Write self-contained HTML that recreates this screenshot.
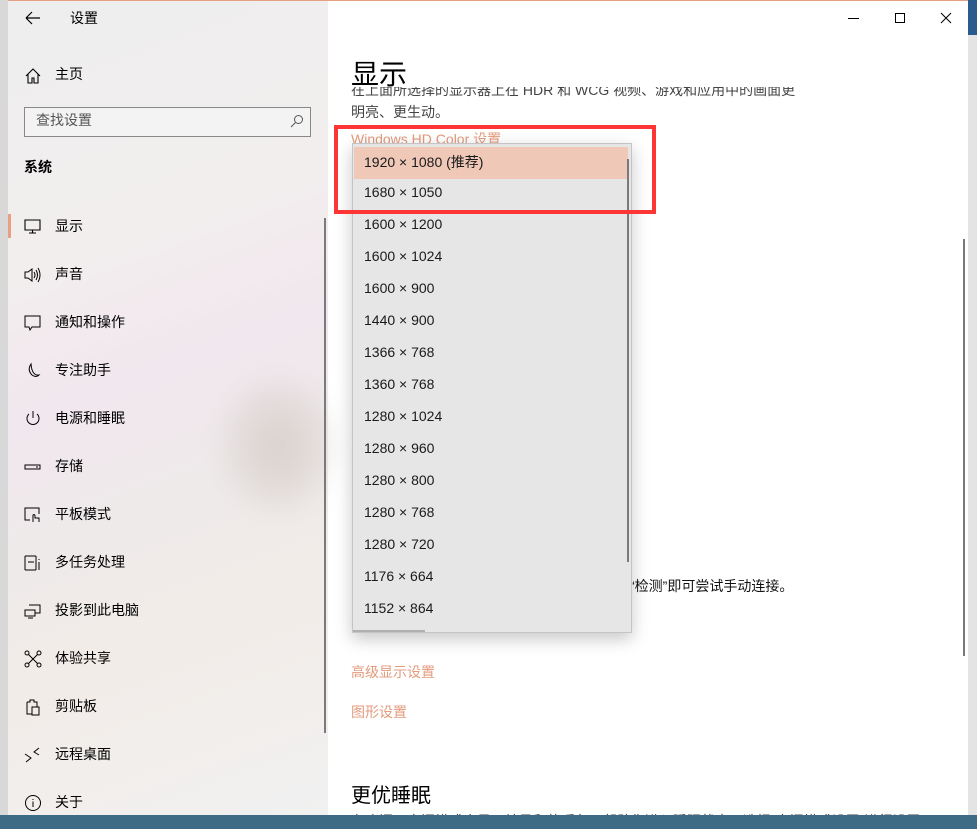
<!DOCTYPE html>
<html><head><meta charset="utf-8"><style>
*{margin:0;padding:0;box-sizing:border-box}
body{width:977px;height:829px;overflow:hidden;position:relative;background:#3d6a85;font-family:"Liberation Sans","Noto Sans CJK SC",sans-serif;color:#000}
.bgl{position:absolute;left:0;top:0;width:8px;height:815px;background:#d8d8d8}
.bgr{position:absolute;left:968px;top:0;width:9px;height:815px;background:#e4e4e4}
.bgr2{position:absolute;left:968px;top:0;width:9px;height:35px;background:#2b5a8c}
.win{position:absolute;left:8px;top:0;width:960px;height:815px;background:#fff;border-top:1px solid #e8a084;overflow:hidden}
.side{position:absolute;left:0;top:0;width:320px;height:815px;background:linear-gradient(160deg,#eeeeee 0%,#f2eeee 30%,#f1e7ee 45%,#eeeaea 60%,#f2ece8 75%,#f1f1f1 100%)}
.blob{position:absolute;left:215px;top:380px;width:110px;height:130px;border-radius:50%;background:radial-gradient(#d8d0cc,rgba(230,222,218,0));filter:blur(12px)}
.t,.nav,.it{margin-top:-2px}
.t{position:absolute;font-size:14px;white-space:nowrap}
.nav{position:absolute;left:47px;font-size:14px}
.ic{position:absolute;left:16px;width:18px;height:18px}
.dd{position:absolute;left:344px;top:142px;width:280px;height:490px;background:#e6e6e6;border:1px solid #c4c4c4;box-shadow:0 6px 16px rgba(0,0,0,.22)}
.it{position:absolute;left:11px;font-size:14px;color:#1a1a1a}
.red{position:absolute;left:326px;top:124px;width:322px;height:89px;border:4px solid #fd3535}
.lnk{color:#e49a7c}
</style></head><body>
<div class="bgl"></div><div class="bgr"></div><div class="bgr2"></div>
<div class="win">
 <div class="side">
  <div class="blob"></div>
  <svg style="position:absolute;left:17px;top:10px" width="16" height="14" viewBox="0 0 16 14"><path d="M1 7H15M1 7L7 1M1 7L7 13" stroke="#000" stroke-width="1.2" fill="none"/></svg>
  <div class="t" style="left:62px;top:9px">设置</div>
  <svg class="ic" style="top:66px" viewBox="0 0 18 18"><path d="M2 9L9 2L16 9M4 7V16H8V11H10V16H14V7" stroke="#000" fill="none" stroke-width="1.1"/></svg>
  <div class="nav" style="top:65px">主页</div>
  <div style="position:absolute;left:16px;top:106px;width:287px;height:30px;border:1.5px solid #888;background:#f4f3f3"></div>
  <div class="t" style="left:28px;top:111px;color:#555">查找设置</div>
  <svg style="position:absolute;left:282px;top:113px" width="14" height="14" viewBox="0 0 14 14"><circle cx="8.5" cy="5.5" r="4" stroke="#555" fill="none"/><path d="M5.5 8.5L1 13" stroke="#555"/></svg>
  <div class="t" style="left:16px;top:158px;font-weight:bold">系统</div>
  <div style="position:absolute;left:0;top:213px;width:3px;height:24px;background:#e8a084"></div>
  <svg class="ic" style="top:217px" viewBox="0 0 18 18"><path d="M1 2H16V12H1ZM8.5 12V15M5 15H12" stroke="#000" fill="none" stroke-width="1.1"/></svg>
  <div class="nav" style="top:217px">显示</div>
  <svg class="ic" style="top:265px" viewBox="0 0 18 18"><path d="M1 6H4L8 3V15L4 12H1Z M10 6Q12 9 10 12M12 4Q15 9 12 14M14 2Q18 9 14 16" stroke="#000" fill="none"/></svg>
  <div class="nav" style="top:265px">声音</div>
  <svg class="ic" style="top:313px" viewBox="0 0 18 18"><path d="M1 2H16V13H8L6 16L5 13H1Z" stroke="#000" fill="none"/></svg>
  <div class="nav" style="top:313px">通知和操作</div>
  <svg class="ic" style="top:361px" viewBox="0 0 18 18"><path d="M7 2Q3 8 8 13Q12 16 15 13Q8 14 7 2Z" stroke="#000" fill="none"/></svg>
  <div class="nav" style="top:361px">专注助手</div>
  <svg class="ic" style="top:409px" viewBox="0 0 18 18"><path d="M9 1V8M5 4A6 6 0 1 0 13 4" stroke="#000" fill="none"/></svg>
  <div class="nav" style="top:409px">电源和睡眠</div>
  <svg class="ic" style="top:457px" viewBox="0 0 18 18"><path d="M1 7H16V11H1ZM12 9H14" stroke="#000" fill="none"/></svg>
  <div class="nav" style="top:457px">存储</div>
  <svg class="ic" style="top:505px" viewBox="0 0 18 18"><path d="M6 14H1V2H15V8M9 16V9Q11 8 11 10V12H15V16" stroke="#000" fill="none"/></svg>
  <div class="nav" style="top:505px">平板模式</div>
  <svg class="ic" style="top:553px" viewBox="0 0 18 18"><path d="M1 2V16M1 2H12M1 16H12M12 2V16M4 8H10M15 5V6M15 8V16" stroke="#000" fill="none"/></svg>
  <div class="nav" style="top:553px">多任务处理</div>
  <svg class="ic" style="top:601px" viewBox="0 0 18 18"><path d="M5 3H16V11H11M1 8H11V14H1ZM4 16H9" stroke="#000" fill="none"/></svg>
  <div class="nav" style="top:601px">投影到此电脑</div>
  <svg class="ic" style="top:649px" viewBox="0 0 18 18"><circle cx="3" cy="3" r="2" stroke="#000" fill="none"/><circle cx="15" cy="3" r="2" stroke="#000" fill="none"/><circle cx="3" cy="15" r="2" stroke="#000" fill="none"/><circle cx="15" cy="15" r="2" stroke="#000" fill="none"/><path d="M4.5 4.5L13.5 13.5M13.5 4.5L4.5 13.5" stroke="#000"/></svg>
  <div class="nav" style="top:649px">体验共享</div>
  <svg class="ic" style="top:697px" viewBox="0 0 18 18"><path d="M3 4H6V2H10V4H13V9M3 4V16H8M8 9H15V17H8Z" stroke="#000" fill="none"/></svg>
  <div class="nav" style="top:697px">剪贴板</div>
  <svg class="ic" style="top:745px" viewBox="0 0 18 18"><path d="M1 8L7 12L2 16M15 2L10 6L15 9" stroke="#000" fill="none"/></svg>
  <div class="nav" style="top:745px">远程桌面</div>
  <svg class="ic" style="top:793px" viewBox="0 0 18 18"><circle cx="9" cy="9" r="7.5" stroke="#000" fill="none"/><path d="M9 7.5V13M9 5V6" stroke="#000"/></svg>
  <div class="nav" style="top:793px">关于</div>
  <div style="position:absolute;left:316px;top:217px;width:2px;height:515px;background:#7a7a7a"></div>
 </div>
 <div style="position:absolute;left:840px;top:17px;width:11px;height:1px;background:#000"></div>
 <div style="position:absolute;left:887px;top:12px;width:10px;height:10px;border:1px solid #000"></div>
 <svg style="position:absolute;left:932px;top:11px" width="12" height="12"><path d="M1 1L11 11M11 1L1 11" stroke="#000"/></svg>
 <div class="t" style="left:343px;top:54px;font-size:28px">显示</div>
 <div class="t" style="left:343px;top:88px;color:#444;height:11px;overflow:hidden;line-height:6px">在上面所选择的显示器上在 HDR 和 WCG 视频、游戏和应用中的画面更</div>
 <div class="t" style="left:343px;top:103px;color:#444">明亮、更生动。</div>
 <div class="t lnk" style="left:343px;top:130px">Windows HD Color 设置</div>
 <div class="t" style="left:622px;top:577px;color:#111">“检测”即可尝试手动连接。</div>
 <div class="t lnk" style="left:343px;top:663px">高级显示设置</div>
 <div class="t lnk" style="left:343px;top:703px">图形设置</div>
 <div class="t" style="left:343px;top:780px;font-size:20px">更优睡眠</div>
 <div class="t" style="left:343px;top:812px;color:#444">在晚间，夜间模式会显示较柔和的暖色，帮助你进入睡眠状态。选择“夜间模式设置”进行设置。</div>
 <div style="position:absolute;left:955px;top:238px;width:2px;height:417px;background:#7a7a7a"></div>
 <div class="dd">
  <div style="position:absolute;left:1px;top:3px;width:274px;height:32px;background:#efc8b8"></div>
  <div style="position:absolute;left:274px;top:15px;width:2px;height:403px;background:#7a7a7a"></div>
  <div style="position:absolute;left:0;top:486px;width:72px;height:2px;background:#b0b0b0"></div>
  <div class="it" style="top:10px">1920 × 1080 (推荐)</div>
  <div class="it" style="top:42px">1680 × 1050</div>
  <div class="it" style="top:74px">1600 × 1200</div>
  <div class="it" style="top:106px">1600 × 1024</div>
  <div class="it" style="top:138px">1600 × 900</div>
  <div class="it" style="top:170px">1440 × 900</div>
  <div class="it" style="top:202px">1366 × 768</div>
  <div class="it" style="top:234px">1360 × 768</div>
  <div class="it" style="top:266px">1280 × 1024</div>
  <div class="it" style="top:298px">1280 × 960</div>
  <div class="it" style="top:330px">1280 × 800</div>
  <div class="it" style="top:362px">1280 × 768</div>
  <div class="it" style="top:394px">1280 × 720</div>
  <div class="it" style="top:426px">1176 × 664</div>
  <div class="it" style="top:458px">1152 × 864</div>
 </div>
 <div class="red"></div>
</div>
</body></html>
